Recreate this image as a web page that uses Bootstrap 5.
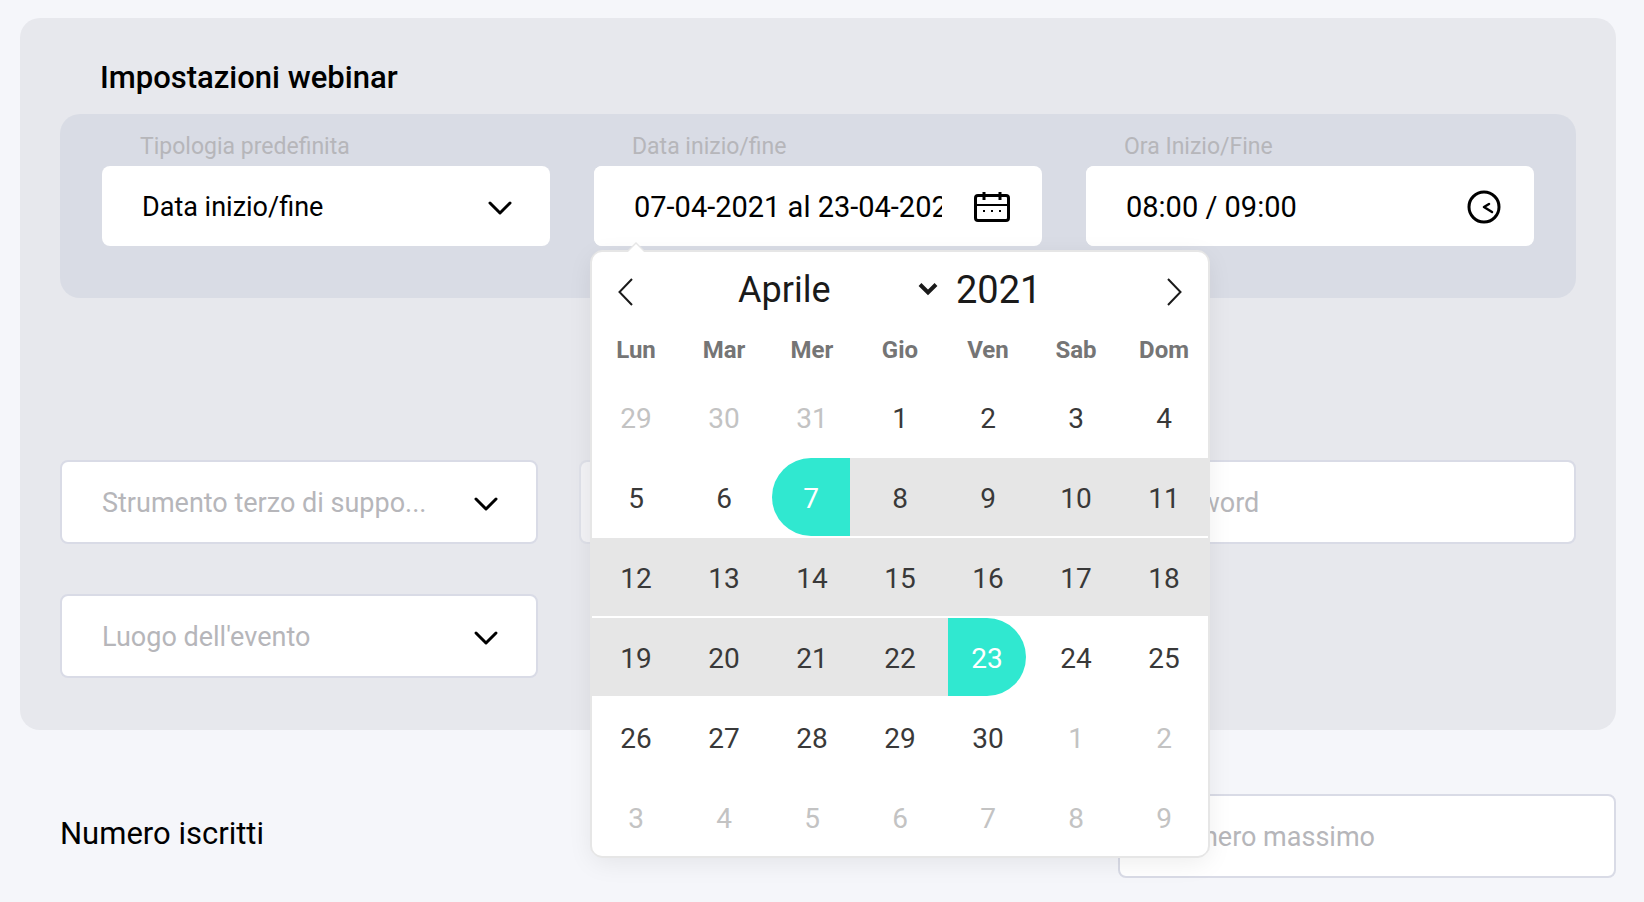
<!DOCTYPE html>
<html lang="it">
<head>
<meta charset="utf-8">
<meta name="viewport" content="width=device-width, initial-scale=1">
<title>Impostazioni webinar</title>
<link href="https://cdn.jsdelivr.net/npm/bootstrap@5.3.0/dist/css/bootstrap.min.css" rel="stylesheet">
<style>
  :root { --edge: #d9dbe6; --hint: #b6b6ba; --accent: #30e8d0; --range: #e6e6e6; }
  body { background: #f5f6fa; color: #000; font-family: Roboto, "Liberation Sans", sans-serif; font-size: 28px; line-height: 36px; }
  .page { padding: 18px 28px 24px 20px; }
  .panel { background: #e7e8ed; border-radius: 20px; padding: 40px 40px 52px; }
  .panel-title { font-size: 31px; line-height: 40px; font-weight: 500; margin: 0 0 16px; padding-left: 40px; }
  .schedule { background: #d9dce5; border-radius: 20px; padding: 12px 42px 52px; margin-bottom: 162px; }
  .trio { display: grid; grid-template-columns: repeat(3, minmax(0, 1fr)); }
  .schedule.trio { column-gap: 44px; }
  .extras { gap: 50px 41px; }
  .caption { display: block; font-size: 23px; line-height: 42px; color: var(--hint); padding-left: 38px; height: 40px; }
  .box, .box:focus, .box:disabled {
    height: 80px; border: 0; border-radius: 8px; background-color: #fff; color: #000;
    padding: 2px 40px 0; font-size: 29px; line-height: 36px; box-shadow: none;
  }
  select.box, .box.outlined { font-size: 27px; }
  select.box {
    padding-right: 80px; background-position: right 36px top 32px; background-size: 28px 20px;
    background-image: url("data:image/svg+xml,%3Csvg xmlns='http://www.w3.org/2000/svg' viewBox='0 0 28 20'%3E%3Cpath d='M4 5l10 10L24 5' fill='none' stroke='%23000' stroke-width='3' stroke-linecap='round' stroke-linejoin='round'/%3E%3C/svg%3E");
  }
  .box.outlined { height: 84px; border: 2px solid var(--edge); color: var(--hint); }
  .box::placeholder { color: var(--hint); opacity: 1; }
  .box-icon { height: 80px; padding-right: 30px; background: #fff; border-radius: 8px; }
  .box-icon .box { padding-right: 0; min-width: 0; margin-right: 30px; }
  .box-icon svg { flex: none; }
  .picker {
    position: absolute; z-index: 10; top: 100%; left: -2px; margin-top: 6px; width: 616px;
    background: #fff; border-radius: 10px;
    box-shadow: 2px 0 0 #e6e6e6, -2px 0 0 #e6e6e6, 0 2px 0 #e6e6e6, 0 -2px 0 #e6e6e6, 0 6px 26px rgba(0,0,0,.08);
  }
  .picker-tip { position: absolute; left: 34px; top: -10px; }
  .picker-head { height: 76px; padding: 0 20px; color: #1a1a1a; }
  .picker-head button { width: 28px; height: 36px; border: 0; background: none; padding: 0; display: flex; }
  .month, .year { font-size: 36px; line-height: 44px; border: 0; background-color: transparent; color: #1a1a1a; padding: 0; }
  .month {
    width: 202px; appearance: none; background-position: right 2px top 14px; background-size: 20px 14px; background-repeat: no-repeat;
    background-image: url("data:image/svg+xml,%3Csvg xmlns='http://www.w3.org/2000/svg' viewBox='0 0 20 14'%3E%3Cpath d='M2 2.500l8 8 8-8' fill='none' stroke='%231a1a1a' stroke-width='4'/%3E%3C/svg%3E");
  }
  .year { width: 90px; font-size: 38px; }
  .days { width: 100%; table-layout: fixed; border-collapse: collapse; color: #393939; }
  .days th { height: 46px; padding: 0 0 2px; font-size: 24px; line-height: 30px; font-weight: 700; text-align: center; color: #757575; }
  .days tbody::before { content: ""; display: block; height: 4px; }
  .days td { height: 80px; padding: 0 0 2px; }
  .days tr:last-child td { height: 78px; padding: 0; }
  .days button { display: block; width: 100%; height: 78px; border: 0; padding: 4px 0 0; background: none; color: inherit; font-size: 28px; text-align: center; }
  .days .out button { color: #c3c3c3; }
  .days .in button { background: var(--range); }
  .days .first { background: linear-gradient(var(--range), var(--range)) right top / 10px 78px no-repeat; }
  .days .last { background: linear-gradient(var(--range), var(--range)) left top / 10px 78px no-repeat; }
  .days .first button, .days .last button { width: 78px; margin: 0 6px 0 4px; color: #fff; background: var(--accent); }
  .days .first button { border-radius: 39px 0 0 39px; }
  .days .last button { border-radius: 0 39px 39px 0; }
  .attendees { margin-top: 64px; padding-left: 40px; }
  .attendees label { font-size: 31px; line-height: 40px; }
  .attendees .box { width: 498px; }
</style>
</head>
<body>
<main class="page">
  <section class="panel">
    <h2 class="panel-title">Impostazioni webinar</h2>
    <div class="schedule trio">
      <div>
        <label class="caption" for="tipologia">Tipologia predefinita</label>
        <select class="form-select box" id="tipologia"><option>Data inizio/fine</option></select>
      </div>
      <div class="position-relative">
        <label class="caption" for="date">Data inizio/fine</label>
        <div class="box-icon d-flex align-items-center">
          <input class="form-control box" id="date" type="text" value="07-04-2021 al 23-04-2021">
          <svg width="40" height="36" viewBox="0 0 40 36" fill="none" stroke="#000" aria-hidden="true">
            <rect x="3.500" y="7.500" width="33" height="25" rx="2.500" stroke-width="3"/>
            <path d="M12 4v8M28 4v8" stroke-width="3"/><path d="M4 17h32" stroke-width="2"/>
            <path d="M11 23h2M19 23h2M27 23h2" stroke-width="2"/>
          </svg>
        </div>
        <div class="picker">
          <svg class="picker-tip" width="20" height="12" viewBox="0 0 20 12" aria-hidden="true"><path d="M0 10L10 0l10 10z" fill="#e6e6e6"/><path d="M0 12L10 2l10 10z" fill="#fff"/></svg>
          <div class="picker-head d-flex align-items-center">
            <button type="button" aria-label="Mese precedente"><svg width="28" height="36" viewBox="0 0 28 36" fill="none" stroke="#1a1a1a" stroke-width="2"><path d="M20 7L7.500 20 20 33"/></svg></button>
            <div class="d-flex flex-grow-1 justify-content-center align-items-center pe-3 gap-3">
              <select class="month" aria-label="Mese"><option>Aprile</option></select>
              <input class="year" type="text" value="2021" aria-label="Anno">
            </div>
            <button type="button" aria-label="Mese successivo"><svg width="28" height="36" viewBox="0 0 28 36" fill="none" stroke="#1a1a1a" stroke-width="2"><path d="M8 7l12.500 13L8 33"/></svg></button>
          </div>
          <table class="days">
            <thead><tr><th>Lun</th><th>Mar</th><th>Mer</th><th>Gio</th><th>Ven</th><th>Sab</th><th>Dom</th></tr></thead>
            <tbody>
              <tr><td class="out"><button type="button">29</button></td><td class="out"><button type="button">30</button></td><td class="out"><button type="button">31</button></td><td><button type="button">1</button></td><td><button type="button">2</button></td><td><button type="button">3</button></td><td><button type="button">4</button></td></tr>
              <tr><td><button type="button">5</button></td><td><button type="button">6</button></td><td class="first"><button type="button">7</button></td><td class="in"><button type="button">8</button></td><td class="in"><button type="button">9</button></td><td class="in"><button type="button">10</button></td><td class="in"><button type="button">11</button></td></tr>
              <tr><td class="in"><button type="button">12</button></td><td class="in"><button type="button">13</button></td><td class="in"><button type="button">14</button></td><td class="in"><button type="button">15</button></td><td class="in"><button type="button">16</button></td><td class="in"><button type="button">17</button></td><td class="in"><button type="button">18</button></td></tr>
              <tr><td class="in"><button type="button">19</button></td><td class="in"><button type="button">20</button></td><td class="in"><button type="button">21</button></td><td class="in"><button type="button">22</button></td><td class="last"><button type="button">23</button></td><td><button type="button">24</button></td><td><button type="button">25</button></td></tr>
              <tr><td><button type="button">26</button></td><td><button type="button">27</button></td><td><button type="button">28</button></td><td><button type="button">29</button></td><td><button type="button">30</button></td><td class="out"><button type="button">1</button></td><td class="out"><button type="button">2</button></td></tr>
              <tr><td class="out"><button type="button">3</button></td><td class="out"><button type="button">4</button></td><td class="out"><button type="button">5</button></td><td class="out"><button type="button">6</button></td><td class="out"><button type="button">7</button></td><td class="out"><button type="button">8</button></td><td class="out"><button type="button">9</button></td></tr>
            </tbody>
          </table>
        </div>
      </div>
      <div>
        <label class="caption" for="ora">Ora Inizio/Fine</label>
        <div class="box-icon d-flex align-items-center">
          <input class="form-control box" id="ora" type="text" value="08:00 / 09:00">
          <svg width="40" height="36" viewBox="0 0 40 36" fill="none" stroke="#000" aria-hidden="true">
            <circle cx="20" cy="19" r="15" stroke-width="3"/><path d="M25 16l-5 3 8 5" stroke-width="2.500" stroke-linecap="round" stroke-linejoin="round"/>
          </svg>
        </div>
      </div>
    </div>
    <div class="trio extras">
      <select class="form-select box outlined" aria-label="Strumento terzo di supporto"><option>Strumento terzo di suppo...</option></select>
      <input class="form-control box outlined opacity-50" type="text" aria-label="Link" disabled>
      <input class="form-control box outlined" type="text" placeholder="Password" aria-label="Password">
      <select class="form-select box outlined" aria-label="Luogo dell'evento"><option>Luogo dell'evento</option></select>
    </div>
  </section>
  <section class="attendees d-flex justify-content-between align-items-center">
    <label class="pb-1" for="massimo">Numero iscritti</label>
    <input class="form-control box outlined" id="massimo" type="text" placeholder="Numero massimo">
  </section>
</main>
<script src="https://cdn.jsdelivr.net/npm/bootstrap@5.3.0/dist/js/bootstrap.bundle.min.js"></script>
</body>
</html>
